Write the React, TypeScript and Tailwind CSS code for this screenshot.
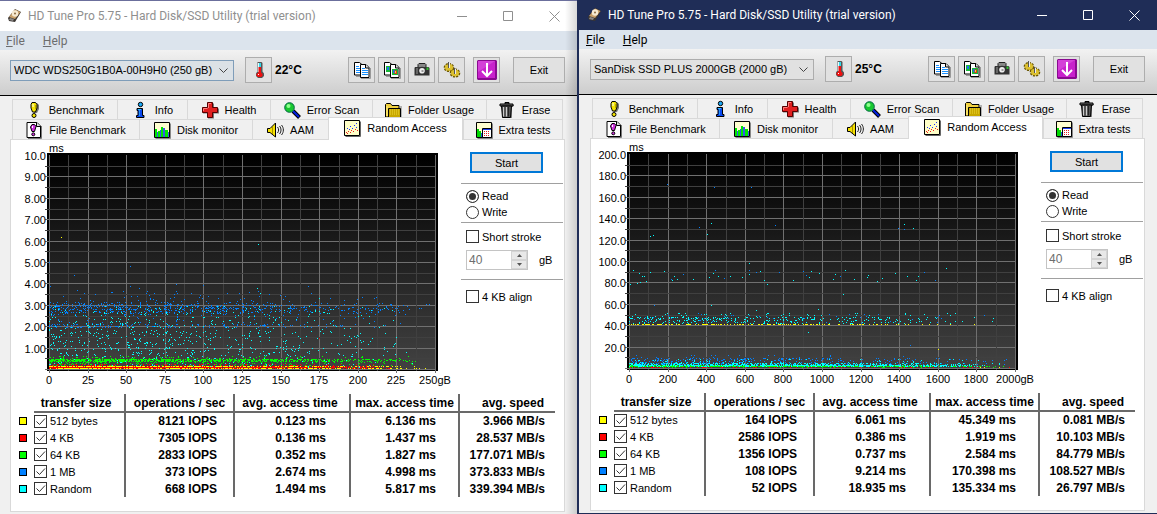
import { useId } from "react";
import type { ReactNode } from "react";
import clsx from "clsx";

type Point = [number, number];

type Series = {
  label: string;
  swatch: string;
  iops: string;
  avg: string;
  max: string;
  speed: string;
};

type DotLayer = { color: string; points: Point[] };

type Drive = {
  active: boolean;
  name: string;
  temperature: string;
  yLabels: string[];
  xLabels: string[];
  series: Series[];
  layers: DotLayer[];
};

const YELLOW = "#ffff00";
const RED = "#ff0000";
const GREEN = "#00ff00";
const BLUE = "#0080ff";
const CYAN = "#00ffff";

/* ---------- scatter data ---------- */

function createRandom(seed: number) {
  let s = seed;
  return () => {
    s = (s * 1664525 + 1013904223) % 4294967296;
    return s / 4294967296;
  };
}

// Samples thin out towards the end of the disk, so x follows a falling density.
function band(
  seed: number,
  count: number,
  top: number,
  bottom: number,
  reach = 386,
  peaked = false,
): Point[] {
  const random = createRandom(seed);
  return Array.from({ length: count }, () => {
    const x = 28 + (1 - Math.pow(random(), 0.6)) * reach;
    const r = peaked ? (random() + random() + random()) / 3 : random();
    return [Math.floor(x), Math.floor(top + r * (bottom - top + 1))];
  });
}

const wdcLayers: DotLayer[] = [
  {
    color: BLUE,
    points: [
      ...band(11, 520, 158, 176, 386, true),
      ...band(12, 130, 161, 171, 386),
      ...band(13, 150, 183, 186, 350),
      ...band(14, 50, 150, 163, 340),
      ...band(15, 60, 172, 186, 340),
      [28, 121], [109, 125], [109, 145], [53, 134], [56, 149], [29, 145],
      [118, 147], [155, 143], [182, 144], [287, 145], [290, 152], [218, 152],
      [355, 156], [405, 163], [400, 167], [388, 168], [379, 182], [91, 151],
    ],
  },
  {
    color: CYAN,
    points: [
      ...band(21, 620, 165, 226, 350),
      ...band(22, 200, 190, 226, 370),
      [237, 103], [236, 147], [239, 152], [375, 196], [298, 157],
    ],
  },
  {
    color: GREEN,
    points: [
      ...band(31, 850, 218, 220, 380),
      ...band(32, 230, 215, 224, 380),
      ...band(33, 120, 221, 226, 360),
    ],
  },
  {
    color: RED,
    points: [
      ...band(41, 620, 225, 226, 350),
      ...band(42, 900, 226, 227, 350),
      ...band(43, 260, 223, 226, 350),
      [298, 197],
    ],
  },
  {
    color: YELLOW,
    points: [
      ...band(51, 340, 225, 225, 385),
      ...band(52, 340, 227, 227, 385),
      [40, 96],
    ],
  },
];

const sanDiskLayers: DotLayer[] = [
  {
    color: YELLOW,
    points: [...band(61, 150, 184, 184, 360), [337, 209], [373, 184], [379, 227], [383, 227], [398, 227]],
  },
  {
    color: BLUE,
    points: [
      ...band(71, 430, 218, 226, 380),
      ...band(72, 25, 215, 219, 380),
      ...band(73, 50, 173, 183, 360),
      [66, 44], [113, 47], [150, 47], [98, 87], [174, 85], [53, 165],
      [297, 88], [303, 89], [70, 139], [82, 134], [114, 130], [123, 138],
      [148, 130], [155, 132], [178, 132], [202, 131], [205, 135], [239, 136],
      [323, 132], [334, 140], [309, 205], [383, 175],
    ],
  },
  {
    color: CYAN,
    points: [
      ...band(81, 600, 223, 226, 375),
      ...band(82, 950, 225, 226, 360),
      ...band(83, 100, 219, 224, 380),
      ...band(84, 260, 177, 183, 350),
      ...band(85, 80, 173, 179, 340),
      [32, 130], [38, 133], [41, 136], [43, 136], [39, 142], [36, 143],
      [29, 144], [45, 141], [49, 132], [63, 131], [71, 140], [73, 136],
      [76, 139], [92, 139], [108, 137], [112, 133], [117, 136], [129, 136],
      [141, 137], [148, 123], [148, 134], [159, 131], [163, 140], [166, 144],
      [192, 140], [208, 137], [210, 131], [218, 133], [232, 139], [234, 134],
      [244, 130], [253, 139], [266, 137], [267, 135], [276, 141], [281, 138],
      [294, 133], [306, 136], [315, 140], [317, 136], [345, 128], [242, 154],
      [110, 165], [217, 169], [207, 192], [155, 170], [49, 96], [52, 95],
      [106, 94], [110, 83], [303, 84], [312, 88], [391, 181], [392, 178],
    ],
  },
  {
    color: GREEN,
    points: [...band(91, 300, 226, 226, 380), ...band(92, 90, 225, 227, 370), [392, 227], [402, 226]],
  },
  {
    color: RED,
    points: [...band(101, 60, 227, 227, 380), [362, 227], [366, 227], [371, 227], [376, 227], [408, 227]],
  },
];

const drives: Drive[] = [
  {
    active: false,
    name: "WDC WDS250G1B0A-00H9H0 (250 gB)",
    temperature: "22°C",
    yLabels: ["10.0", "9.00", "8.00", "7.00", "6.00", "5.00", "4.00", "3.00", "2.00", "1.00"],
    xLabels: ["0", "25", "50", "75", "100", "125", "150", "175", "200", "225", "250gB"],
    layers: wdcLayers,
    series: [
      { label: "512 bytes", swatch: "bg-[#ffff00]", iops: "8121", avg: "0.123", max: "6.136", speed: "3.966" },
      { label: "4 KB", swatch: "bg-[#ff0000]", iops: "7305", avg: "0.136", max: "1.437", speed: "28.537" },
      { label: "64 KB", swatch: "bg-[#00ff00]", iops: "2833", avg: "0.352", max: "1.827", speed: "177.071" },
      { label: "1 MB", swatch: "bg-[#0080ff]", iops: "373", avg: "2.674", max: "4.998", speed: "373.833" },
      { label: "Random", swatch: "bg-[#00ffff]", iops: "668", avg: "1.494", max: "5.817", speed: "339.394" },
    ],
  },
  {
    active: true,
    name: "SanDisk SSD PLUS 2000GB (2000 gB)",
    temperature: "25°C",
    yLabels: ["200.0", "180.0", "160.0", "140.0", "120.0", "100.0", "80.0", "60.0", "40.0", "20.0"],
    xLabels: ["0", "200", "400", "600", "800", "1000", "1200", "1400", "1600", "1800", "2000gB"],
    layers: sanDiskLayers,
    series: [
      { label: "512 bytes", swatch: "bg-[#ffff00]", iops: "164", avg: "6.061", max: "45.349", speed: "0.081" },
      { label: "4 KB", swatch: "bg-[#ff0000]", iops: "2586", avg: "0.386", max: "1.919", speed: "10.103" },
      { label: "64 KB", swatch: "bg-[#00ff00]", iops: "1356", avg: "0.737", max: "2.584", speed: "84.779" },
      { label: "1 MB", swatch: "bg-[#0080ff]", iops: "108", avg: "9.214", max: "170.398", speed: "108.527" },
      { label: "Random", swatch: "bg-[#00ffff]", iops: "52", avg: "18.935", max: "135.334", speed: "26.797" },
    ],
  },
];

/* ---------- icons ---------- */

function Icon({ children }: { children: ReactNode }) {
  return (
    <svg viewBox="0 0 16 16" className="size-4 shrink-0 overflow-visible" aria-hidden="true">
      {children}
    </svg>
  );
}

function DiskIcon() {
  return (
    <Icon>
      <path d="M1 10 8 1l6 3-6 10-6-1z" fill="#3b3632" />
      <path d="M2 9 8 1.500l5.500 2.500L8 11z" fill="#c9a06a" />
      <circle cx="8" cy="5.500" r="3.200" fill="#f7ead2" />
      <circle cx="8" cy="5.500" r="1" fill="#8a6a40" />
      <path d="m3 10 4 1-1 2-4-1z" fill="#8d8a88" />
    </Icon>
  );
}

function BenchmarkIcon() {
  return (
    <Icon>
      <path d="M7 1h4l2 2v4l-2 4H8L6 7V3z" fill="#777" />
      <path d="M6 .500h3.500l1.500 2V6L9.500 10h-3L5 6V2.500z" fill="#f5e400" stroke="#000" />
      <path d="M7 2v3" stroke="#fff" />
      <path d="M9.500 3v4" stroke="#b8a800" />
      <circle cx="8" cy="13.500" r="2" fill="#f5e400" stroke="#000" />
    </Icon>
  );
}

function InfoIcon() {
  return (
    <Icon>
      <circle cx="8.500" cy="2.500" r="2.200" fill="#18a8f8" stroke="#000" />
      <path d="M5 6.500h5.500v7H12v2H4.500v-2H6v-5H5z" fill="#0848f0" stroke="#000" />
      <path d="M6 7.500h3" stroke="#30c0ff" />
      <path d="M7.500 8v6" stroke="#2090ff" />
    </Icon>
  );
}

function HealthIcon() {
  return (
    <Icon>
      <path d="M6 1.500h6v5h5v5h-5v5H6v-5H1v-5h5z" fill="#777" />
      <path d="M5.500.500h5v5h5v5h-5v5h-5v-5h-5v-5h5z" fill="#e02020" stroke="#500" />
      <path d="M6.500 6V1.500H9M1.500 9V6.500h4" stroke="#ff8080" fill="none" />
    </Icon>
  );
}

function ScanIcon() {
  return (
    <Icon>
      <path d="m9 9 6.500 6.500" stroke="#000" strokeWidth="4" />
      <path d="m9 9 6 6" stroke="#0020e0" strokeWidth="2" />
      <circle cx="5.500" cy="5.500" r="4.800" fill="#18c830" stroke="#064" />
      <circle cx="4.500" cy="4" r="2" fill="#90ff90" />
    </Icon>
  );
}

function FolderIcon() {
  return (
    <Icon>
      <path d="M2 16.500h14V4" stroke="#777" fill="none" />
      <path d="M.500 15V2.500l1-1h4l1.500 2h7V15z" fill="#f0d040" stroke="#000" />
      <path d="M3.500 15.500v-9h12v9z" fill="#c8a800" stroke="#000" />
      <path d="M5 8h9M5 10h9M5 12h9" stroke="#f0d838" strokeDasharray="1 1" />
      <path d="M2 4v10" stroke="#fff080" />
    </Icon>
  );
}

function TrashIcon() {
  return (
    <Icon>
      <path d="M3 3h12v1l-2 1v11H5V5z" fill="#888" />
      <path d="M6 .500h4V2H6z" fill="#bbb" stroke="#000" />
      <path d="M1 2h13v2H1z" fill="#777" stroke="#000" />
      <path d="M2.500 4h10l-1 11.500h-8z" fill="#555" stroke="#000" />
      <path d="M4.500 5v9.500M7.500 5v9.500" stroke="#ccc" />
      <path d="M9.500 5v9.500" stroke="#222" />
    </Icon>
  );
}

function FileBenchmarkIcon() {
  return (
    <Icon>
      <path d="M2 16.500h13.500V4" stroke="#777" fill="none" />
      <path d="M1 .500h10L14.500 4v11.500H1z" fill="#fff" stroke="#000" />
      <path d="M10.500.500V4.500h4" stroke="#000" fill="#ddd" />
      <path d="M6 2.500h2.500l1.500 2-1.500 5H6L4.500 5z" fill="#d030e0" stroke="#000" />
      <path d="M6.500 4v2" stroke="#fff" />
      <circle cx="7.300" cy="12.300" r="1.500" fill="#d030e0" stroke="#000" />
    </Icon>
  );
}

function MonitorIcon() {
  return (
    <Icon>
      <path d="M1.500 16.500h15V1.500" stroke="#888" fill="none" />
      <path d="M.500.500h15v15H.500z" fill="#ffffd0" stroke="#000" />
      <g shapeRendering="crispEdges">
        <path d="M1 7h2v8H1zM4 9h2v6H4zM7 5h2v10H7zM11 8h3v7h-3z" fill="#00e800" />
        <path d="M3 10h1v5H3zM6 8h1v7H6zM9 6h2v9H9zM14 10h1v5h-1z" fill="#3858e8" />
      </g>
    </Icon>
  );
}

function SpeakerIcon() {
  return (
    <Icon>
      <path d="M.500 6.500h2.500L8.500 1v14L3 10.500H.500z" fill="#f5e000" stroke="#000" />
      <path d="M5.500 5v7" stroke="#a89000" />
      <path d="M10.500 5c1.500 2 1.500 4 0 6M12.500 4c2 2.500 2 5.500 0 8M14.500 3c2.500 3 2.500 7 0 10" stroke="#222" fill="none" />
    </Icon>
  );
}

function ScatterIcon() {
  return (
    <Icon>
      <path d="M1.500 16.500h15V1.500" stroke="#666" fill="none" />
      <path d="M.500.500h15v15H.500z" fill="#ffffc8" stroke="#000" />
      <g shapeRendering="crispEdges">
        <path d="M3 8h1v1H3zM6 6h1v1H6zM8 8h1v1H8zM10 5h1v1h-1zM12 3h1v1h-1zM12 7h1v1h-1zM5 9h1v1H5z" fill="#2030ff" />
        <path d="M2 12h1v1H2zM4 11h1v1H4zM6 12h1v1H6zM7 10h1v1H7zM9 11h1v1H9zM11 9h1v1h-1zM13 10h1v1h-1zM3 13h1v1H3z" fill="#f02020" />
      </g>
    </Icon>
  );
}

function ExtraIcon() {
  return (
    <Icon>
      <path d="M1.500 16.500h15V1.500" stroke="#888" fill="none" />
      <path d="M.500.500h15v15H.500z" fill="#ffffd0" stroke="#000" />
      <path d="M1 7h2v8H1zM3 9h2v6H3z" fill="#00d800" />
      <path d="M5 11h2v4H5z" fill="#3050e0" />
      <path d="M6.500 6.500h9v9h-9z" fill="#fff" stroke="#000" />
      <g shapeRendering="crispEdges">
        <path d="M7 7h8v1H7z" fill="#2040f0" />
        <path d="M8 9h1v1H8zM10 9h1v1h-1zM12 9h1v1h-1zM8 11h1v1H8zM10 11h1v1h-1zM12 11h1v1h-1zM8 13h1v1H8zM10 13h1v1h-1zM12 13h1v1h-1z" fill="#e02020" />
      </g>
    </Icon>
  );
}

function ThermometerIcon() {
  return (
    <Icon>
      <path d="M6 1 7 0h3.500l1 1v8.500l1.500 2V14l-2 2H7l-2-2v-2.500l1-1.500z" fill="#555" />
      <path d="M6.500 1H10v9H6.500z" fill="#e8f8ff" />
      <path d="M8 1h2v4H8z" fill="#30d8e8" />
      <path d="M7.500 5H10v5.500l1.500 1.500v2L10 15H7l-1.500-1.500V12l2-1.500z" fill="#f01010" />
      <path d="M7 12.500h1" stroke="#fff" />
    </Icon>
  );
}

function CopyPages({ children }: { children: ReactNode }) {
  return (
    <Icon>
      <path d="M2 14.500h4M7 16.500h9.500V6" stroke="#999" fill="none" />
      <path d="M.500.500h5L8.500 3v10h-8z" fill="#fff" stroke="#000" />
      <path d="M6.500 2.500h5.500l3 3v10H6.500z" fill="#fff" stroke="#000" />
      <path d="M11.500 2.500v3.500H15" stroke="#000" fill="#ddd" />
      {children}
    </Icon>
  );
}

function CopyTextIcon() {
  return (
    <CopyPages>
      <path d="M2 4.500h3M2 6.500h4M2 8.500h4M2 10.500h4M8 6.500h3M8 8.500h6M8 10.500h6M8 12.500h6" stroke="#1890ff" />
    </CopyPages>
  );
}

function CopyImageIcon() {
  return (
    <CopyPages>
      <path d="M2 4h4v6H2z" fill="#18b838" />
      <path d="M3 5h2v3H3z" fill="#2070f0" />
      <path d="M8 7h6v6H8z" fill="#18b838" />
      <path d="M9 8h2v3H9z" fill="#2070f0" />
      <path d="M10.500 8.500h2.500v3.500h-2.500z" fill="#e83018" />
      <path d="M11 9h1v2h-1z" fill="#f8e020" />
    </CopyPages>
  );
}

function CameraIcon() {
  return (
    <Icon>
      <path d="M4 5V2.500L5 1.500h6l1 1V5" fill="#888" stroke="#222" />
      <path d="M1 5h13.500l1 1v7.500H.500V6z" fill="#333" />
      <path d="M2 6h2v6H2z" fill="#666" />
      <circle cx="8" cy="8.800" r="4" fill="#333" />
      <circle cx="8" cy="8.800" r="2.800" fill="#eee" />
      <path d="M7.500 8h2v2h-2z" fill="#999" />
      <path d="M12.500 5.500h2V8h-2z" fill="#30c030" />
    </Icon>
  );
}

function GearsIcon() {
  return (
    <Icon>
      <ellipse cx="5" cy="5.500" rx="4.300" ry="3.600" fill="#d8b820" stroke="#6a5600" strokeWidth="2" strokeDasharray="2 1" />
      <ellipse cx="11" cy="11" rx="4.300" ry="3.600" fill="#d8b820" stroke="#6a5600" strokeWidth="2" strokeDasharray="2 1" />
      <ellipse cx="5" cy="5.500" rx="4" ry="3.300" fill="#dcc030" />
      <ellipse cx="11" cy="11" rx="4" ry="3.300" fill="#dcc030" />
      <path d="M4.500 0v6M10.500 6v6" stroke="#555" />
      <path d="M5.500 1v5M11.500 7v5" stroke="#eee" />
    </Icon>
  );
}

function SaveIcon() {
  return (
    <svg viewBox="0 0 20 20" className="size-5 shrink-0" aria-hidden="true">
      <path d="M1 0h18l1 1v18l-1 1H1l-1-1V1z" fill="#8a0a90" />
      <path d="M1 1h17v17H1z" fill="#c822cc" />
      <path d="M1 1h17L1 12z" fill="#e060e4" opacity="0.500" />
      <path d="M10 3v12M5 11l5 5 5-5" stroke="#fff" strokeWidth="2" fill="none" />
    </svg>
  );
}

/* ---------- window parts ---------- */

function TitleBar({ active }: { active: boolean }) {
  return (
    <header
      className={clsx(
        "flex h-[30px] items-center",
        active ? "bg-[#1f2d57] pl-2 text-white" : "bg-white pl-[7px] text-[#8f8f8f]",
      )}
    >
      <DiskIcon />
      <h1 className="ml-[5px] flex-1 truncate font-[Roboto,'Open_Sans',sans-serif] text-xs leading-4">
        HD Tune Pro 5.75 - Hard Disk/SSD Utility (trial version)
      </h1>
      <button type="button" aria-label="Minimize" className="grid h-full w-[46px] place-items-center">
        <svg viewBox="0 0 11 11" className="size-[11px]" fill="none" stroke="currentColor">
          <path d="M0 5.500h10" />
        </svg>
      </button>
      <button type="button" aria-label="Maximize" className="grid h-full w-[46px] place-items-center">
        <svg viewBox="0 0 11 11" className="size-[11px]" fill="none" stroke="currentColor">
          <path d="M.500.500h9v9h-9z" />
        </svg>
      </button>
      <button type="button" aria-label="Close" className="grid h-full w-[46px] place-items-center">
        <svg viewBox="0 0 11 11" className="size-[11px]" fill="none" stroke="currentColor">
          <path d="m.500.500 10 10M10.500.500l-10 10" />
        </svg>
      </button>
    </header>
  );
}

function MenuBar({ active }: { active: boolean }) {
  return (
    <nav
      className={clsx(
        "flex h-[19px] items-center gap-[18px] bg-[#dce4ed] font-[Roboto,'Open_Sans',sans-serif] text-xs leading-4",
        active ? "pl-[7px] text-black" : "pl-1.5 text-[#6d6d6d]",
      )}
    >
      <button type="button">
        <u>F</u>ile
      </button>
      <button type="button">
        <u>H</u>elp
      </button>
    </nav>
  );
}

function ToolButton({ label, children }: { label: string; children: ReactNode }) {
  return (
    <button
      type="button"
      aria-label={label}
      className="grid h-[26px] w-[27px] shrink-0 place-items-center border border-[#adadad] bg-[#e1e1e1]"
    >
      {children}
    </button>
  );
}

function Toolbar({ drive }: { drive: Drive }) {
  return (
    <div
      className={clsx(
        "flex h-[46px] items-center border-b border-black bg-linear-to-b from-[#f2f2f2] to-[#cdcdcd] pr-3 pb-[5px]",
        drive.active ? "pl-[11px]" : "pl-2.5",
      )}
    >
      <div className="relative w-56">
        <select
          aria-label="Drive"
          className={clsx(
            "h-[21px] w-full appearance-none border pl-[3px]",
            drive.active ? "border-[#adadad] bg-[#e1e1e1]" : "border-[#7f9db9] bg-[#dbe1e6]",
          )}
        >
          <option>{drive.name}</option>
        </select>
        <svg viewBox="0 0 9 5" className="pointer-events-none absolute top-2 right-1.5 h-[5px] w-[9px]" fill="none" stroke="#444">
          <path d="m.500.500 4 4 4-4" />
        </svg>
      </div>
      <div className="ml-[11px] flex items-center gap-[3px]">
        <ToolButton label="Temperature">
          <ThermometerIcon />
        </ToolButton>
        <span className="text-xs font-bold">{drive.temperature}</span>
      </div>
      <div className="ml-auto flex items-center gap-[3px]">
        <ToolButton label="Copy text">
          <CopyTextIcon />
        </ToolButton>
        <ToolButton label="Copy image">
          <CopyImageIcon />
        </ToolButton>
        <ToolButton label="Screenshot">
          <CameraIcon />
        </ToolButton>
        <ToolButton label="Options">
          <GearsIcon />
        </ToolButton>
      </div>
      <div className="ml-2 flex items-center gap-[13px]">
        <ToolButton label="Save">
          <SaveIcon />
        </ToolButton>
        <button type="button" className="h-[26px] w-[52px] border border-[#adadad] bg-[#e1e1e1]">
          Exit
        </button>
      </div>
    </div>
  );
}

function Tab({ icon, selected, children }: { icon: ReactNode; selected?: boolean; children: ReactNode }) {
  return (
    <button
      type="button"
      role="tab"
      aria-selected={!!selected}
      className={clsx(
        "flex items-center justify-center gap-[7px] border-t border-l border-[#d9d9d9] whitespace-nowrap",
        selected ? "relative z-10 -mt-0.5 -mb-px border-r bg-white pb-[3px]" : "h-5 bg-[#f0f0f0]",
      )}
    >
      {icon}
      {children}
    </button>
  );
}

function Tabs() {
  return (
    <div role="tablist" className="px-0.5">
      <div className="grid grid-cols-[105fr_70fr_83fr_102fr_114fr_76fr] border-r border-[#d9d9d9]">
        <Tab icon={<BenchmarkIcon />}>Benchmark</Tab>
        <Tab icon={<InfoIcon />}>Info</Tab>
        <Tab icon={<HealthIcon />}>Health</Tab>
        <Tab icon={<ScanIcon />}>Error Scan</Tab>
        <Tab icon={<FolderIcon />}>Folder Usage</Tab>
        <Tab icon={<TrashIcon />}>Erase</Tab>
      </div>
      <div className="grid grid-cols-[127fr_113fr_76fr_135fr_99fr] border-r border-[#d9d9d9]">
        <Tab icon={<FileBenchmarkIcon />}>File Benchmark</Tab>
        <Tab icon={<MonitorIcon />}>Disk monitor</Tab>
        <Tab icon={<SpeakerIcon />}>AAM</Tab>
        <Tab icon={<ScatterIcon />} selected>
          Random Access
        </Tab>
        <Tab icon={<ExtraIcon />}>Extra tests</Tab>
      </div>
    </div>
  );
}

function AccessChart({ drive }: { drive: Drive }) {
  const gradient = useId();
  const lines = Array.from({ length: 21 }, (_, i) => i);
  const lineX = (i: number) => Math.round(28 + i * 19.3);
  const lineY = (i: number) => Math.round(14 + i * 10.7);

  return (
    <svg
      viewBox="-4 0 440 248"
      className="h-[248px] w-[440px] shrink-0 text-[11px]"
      role="img"
      aria-label="Access time by position"
    >
      <defs>
        <linearGradient id={gradient} x1="0" y1="0" x2="0" y2="1">
          <stop offset="0" stopColor="#000000" />
          <stop offset="1" stopColor="#424242" />
        </linearGradient>
      </defs>
      <g shapeRendering="crispEdges">
        <rect x="26" y="12" width="391" height="218" fill="#000000" />
        <rect x="28" y="14" width="387" height="215" fill={`url(#${gradient})`} />
        {lines.map((i) => (
          <g key={i} fill={i % 2 ? "#404040" : "#707070"}>
            <rect x={lineX(i)} y="14" width="1" height={i % 2 ? 216 : 218} />
            {i > 0 && <rect x="24" y={lineY(i)} width="391" height="1" />}
          </g>
        ))}
        {drive.layers.map((layer) => (
          <path
            key={layer.color}
            fill={layer.color}
            d={layer.points.map(([x, y]) => `M${x} ${y}h1v1h-1z`).join("")}
          />
        ))}
      </g>
      <text x="28" y="11">
        ms
      </text>
      {drive.yLabels.map((label, i) => (
        <text key={label} x="25" y={lineY(i * 2) + 5} textAnchor="end">
          {label}
        </text>
      ))}
      {drive.xLabels.map((label, i) => (
        <text key={label} x={lineX(i * 2)} y="243" textAnchor="middle">
          {label}
        </text>
      ))}
    </svg>
  );
}

function CheckBox({ label, checked }: { label: string; checked?: boolean }) {
  return (
    <label className="flex h-[13px] items-center gap-[3px] whitespace-nowrap">
      <span className="relative size-[13px] shrink-0">
        <input
          type="checkbox"
          defaultChecked={checked}
          className="peer block size-[13px] appearance-none border border-[#333] bg-white"
        />
        <svg
          viewBox="0 0 13 13"
          className="pointer-events-none absolute inset-0 hidden peer-checked:block"
          fill="none"
          stroke="#333"
        >
          <path d="m2.500 6.500 3 3 5.500-6" />
        </svg>
      </span>
      {label}
    </label>
  );
}

function RadioButton({ name, label, checked }: { name: string; label: string; checked?: boolean }) {
  return (
    <label className="flex h-4 items-center gap-[3px]">
      <input
        type="radio"
        name={name}
        defaultChecked={checked}
        className="size-[13px] appearance-none rounded-full border border-[#333] bg-white checked:bg-[#333] checked:inset-ring-2 checked:inset-ring-white"
      />
      {label}
    </label>
  );
}

function SidePanel() {
  const mode = useId();

  return (
    <div className="flex-1 pt-[11px]">
      <button type="button" className="ml-[13px] block h-[21px] w-[73px] border-2 border-[#0078d7] bg-[#e1e1e1]">
        Start
      </button>
      <div className="mt-2.5 ml-1 border-y border-[#a0a0a0] pt-1 pb-[2px] pl-[5px]">
        <RadioButton name={mode} label="Read" checked />
        <RadioButton name={mode} label="Write" />
      </div>
      <div className="ml-1 border-b border-[#a0a0a0] pt-[7px] pb-[9px] pl-[5px]">
        <CheckBox label="Short stroke" />
        <div className="mt-[7px] flex items-center">
          <div className="flex h-5 w-[62px] border border-[#c4c4c4] bg-white">
            <input
              type="text"
              aria-label="Short stroke size"
              defaultValue="40"
              disabled
              className="w-11 min-w-0 flex-1 pl-0.5 text-xs text-[#6d6d6d]"
            />
            <div className="flex w-4 flex-col bg-[#e8e8e8]">
              <button type="button" disabled aria-label="Increase" className="grid flex-1 place-items-center border border-[#d4d4d4]">
                <svg viewBox="0 0 5 3" className="h-[3px] w-[5px]">
                  <path d="M0 3 2.500 0 5 3z" fill="#555" />
                </svg>
              </button>
              <button type="button" disabled aria-label="Decrease" className="grid flex-1 place-items-center border border-[#d4d4d4]">
                <svg viewBox="0 0 5 3" className="h-[3px] w-[5px]">
                  <path d="M0 0l2.500 3L5 0z" fill="#555" />
                </svg>
              </button>
            </div>
          </div>
          <span className="ml-[11px]">gB</span>
        </div>
      </div>
      <div className="mt-2.5 ml-[9px]">
        <CheckBox label="4 KB align" />
      </div>
    </div>
  );
}

function ResultsTable({ series }: { series: Series[] }) {
  return (
    <table className="mt-[5px] w-full table-fixed text-xs leading-4 font-bold whitespace-nowrap">
      <colgroup>
        <col className="w-[15px]" />
        <col className="w-[91px]" />
        <col className="w-[109px]" />
        <col className="w-[116px]" />
        <col className="w-[109px]" />
        <col className="w-24" />
      </colgroup>
      <thead>
        <tr className="h-[18px]">
          <td />
          <th className="border-b-2 border-[#696969] pr-1.5">transfer size</th>
          <th className="border-b-2 border-l-2 border-[#696969]">operations / sec</th>
          <th className="border-b-2 border-l-2 border-[#696969] pr-1">avg. access time</th>
          <th className="border-b-2 border-l-2 border-[#696969]">max. access time</th>
          <th className="border-b-2 border-l-2 border-[#696969] pr-[11px] text-right">avg. speed</th>
        </tr>
      </thead>
      <tbody className="text-right">
        {series.map((row) => (
          <tr key={row.label} className="h-[17px]">
            <td>
              <div className={clsx("size-2 border border-black", row.swatch)} />
            </td>
            <td className="text-[11px] font-normal">
              <CheckBox label={row.label} checked />
            </td>
            <td className="border-l-2 border-[#696969] pr-4">{row.iops} IOPS</td>
            <td className="border-l-2 border-[#696969] pr-[23px]">{row.avg} ms</td>
            <td className="border-l-2 border-[#696969] pr-[22px]">{row.max} ms</td>
            <td className="border-l-2 border-[#696969] pr-2.5">{row.speed} MB/s</td>
          </tr>
        ))}
      </tbody>
    </table>
  );
}

function DriveWindow({ drive }: { drive: Drive }) {
  return (
    <section
      className={clsx(
        "relative flex flex-col bg-[#f0f0f0]",
        drive.active ? "border-b border-l-2 border-[#1f2d57]" : "border-t border-[#6b6f9c]",
      )}
    >
      <TitleBar active={drive.active} />
      <MenuBar active={drive.active} />
      <Toolbar drive={drive} />
      <div className={clsx("flex flex-1 flex-col pt-[3px] pr-3 pb-[2px]", drive.active ? "pl-[11px]" : "pl-2.5")}>
        <Tabs />
        <main className="flex-1 border border-[#d9d9d9] bg-white pt-px pr-[9px] pb-3 pl-2">
          <div className="-mr-2 -ml-0.5 flex">
            <AccessChart drive={drive} />
            <SidePanel />
          </div>
          <ResultsTable series={drive.series} />
        </main>
      </div>
      {!drive.active && (
        <div className="pointer-events-none absolute inset-y-0 right-0 w-3 bg-linear-to-l from-black/15 to-transparent" />
      )}
    </section>
  );
}

export default function App() {
  return (
    <div className="grid min-h-screen grid-cols-[577fr_580fr] font-['Liberation_Sans',Arial,sans-serif] text-[11px] leading-4 text-black">
      {drives.map((drive) => (
        <DriveWindow key={drive.name} drive={drive} />
      ))}
    </div>
  );
}
